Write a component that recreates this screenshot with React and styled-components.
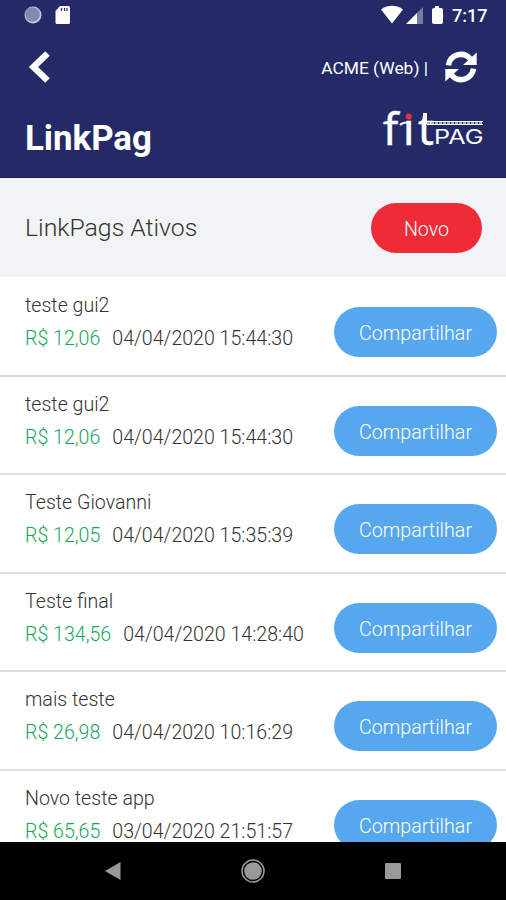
import styled, { createGlobalStyle } from 'styled-components';

const links = [
  { id: 1, name: 'teste gui2', value: 'R$ 12,06', date: '04/04/2020 15:44:30' },
  { id: 2, name: 'teste gui2', value: 'R$ 12,06', date: '04/04/2020 15:44:30' },
  { id: 3, name: 'Teste Giovanni', value: 'R$ 12,05', date: '04/04/2020 15:35:39' },
  { id: 4, name: 'Teste final', value: 'R$ 134,56', date: '04/04/2020 14:28:40' },
  { id: 5, name: 'mais teste', value: 'R$ 26,98', date: '04/04/2020 10:16:29' },
  { id: 6, name: 'Novo teste app', value: 'R$ 65,65', date: '03/04/2020 21:51:57' },
];

function StatusIcons() {
  return (
    <svg width="64" height="24" viewBox="0 0 64 24">
      <path d="M0 9.5C6 4.6 16 4.6 22 9.5L11 23.5Z" fill="#fff" />
      <path d="M42 7V24H25Z" fill="#777ba6" />
      <path d="M36 13V24H25Z" fill="#fff" />
      <path d="M54 6h4v2h2q2 0 2 2v12q0 2-2 2h-7q-2 0-2-2V10q0-2 2-2h1Z" fill="#fff" />
    </svg>
  );
}

function RefreshIcon() {
  return (
    <svg width="32" height="32" viewBox="0 0 32 32">
      <path d="M3.5 14.300A12.500 12.500 0 0 1 25.500 8" stroke="#fff" strokeWidth="5.500" fill="none" />
      <path d="M31.700 1.500V14H18Z" fill="#fff" />
      <path d="M28.500 17.700A12.500 12.500 0 0 1 6.500 24" stroke="#fff" strokeWidth="5.500" fill="none" />
      <path d="M.3 30.500V18H14Z" fill="#fff" />
    </svg>
  );
}

function Logo() {
  return (
    <LogoSvg width="102" height="42" viewBox="0 0 102 42">
      <text x="1 21 36" y="37" fontFamily="Noto Sans" fontSize="44" fill="#fff" stroke="#fff" strokeWidth="0.5">
        fit
      </text>
      <rect x="22" y="0" width="10" height="12" fill="#242a68" />
      <circle cx="26.8" cy="8.500" r="3" fill="#ee3038" />
      <path d="M18 17q2.500-2.500 7-2.500" stroke="#fff" strokeWidth="2" fill="none" />
      <path d="M43 5v10" stroke="#fff" strokeWidth="4" />
      <path d="M45 13.500H101" stroke="#fff" strokeWidth="1" />
      <path d="M45 15H101" stroke="#aeb1cf" strokeWidth="2" strokeDasharray="3 1" />
      <path d="M45 16.500H101" stroke="#fff" strokeWidth="1" />
      <text
        x="52"
        y="36"
        fontFamily="Inter"
        fontSize="19.5"
        fill="#fff"
        textLength="49.5"
        lengthAdjust="spacingAndGlyphs"
      >
        PAG
      </text>
    </LogoSvg>
  );
}

function App() {
  return (
    <Screen>
      <GlobalStyle />
      <Header>
        <StatusBar>
          <svg width="50" height="24" viewBox="0 0 50 24">
            <circle cx="9" cy="15" r="8.500" fill="#c9cbdc" />
            <circle cx="8.500" cy="14.500" r="7.300" fill="#8588aa" />
            <path d="M36 6h8.500q1.500 0 1.500 1.500v15q0 1.500-1.500 1.500H33q-1.500 0-1.500-1.500V11Z" fill="#fff" />
            <path d="M37.500 8v3M40.500 8v3M43 8v3" stroke="#242a68" strokeWidth="1.200" />
          </svg>
          <StatusRight>
            <StatusIcons />
            <Clock>7:17</Clock>
          </StatusRight>
        </StatusBar>
        <Toolbar>
          <IconButton aria-label="Voltar">
            <svg width="22" height="34" viewBox="0 0 22 34">
              <path d="M19.500 3.500 5.500 17l14 13.500" stroke="#fff" strokeWidth="6.500" fill="none" />
            </svg>
          </IconButton>
          <Account>
            <span>ACME (Web) |</span>
            <IconButton aria-label="Atualizar">
              <RefreshIcon />
            </IconButton>
          </Account>
        </Toolbar>
        <TitleRow>
          <h1>LinkPag</h1>
          <Logo />
        </TitleRow>
      </Header>
      <SectionBar>
        <h2>LinkPags Ativos</h2>
        <PillButton $color="#ef2b38" $width={111}>
          Novo
        </PillButton>
      </SectionBar>
      <List>
        {links.map(link => (
          <Item key={link.id}>
            <div>
              <Name>{link.name}</Name>
              <Details>
                <Value>{link.value}</Value>
                <span>{link.date}</span>
              </Details>
            </div>
            <PillButton $color="#56a7ee" $width={163}>
              Compartilhar
            </PillButton>
          </Item>
        ))}
      </List>
      <NavBar>
        <svg width="16" height="20" viewBox="0 0 16 20">
          <path d="M0 10 15.500 1v18Z" fill="#999" />
        </svg>
        <svg width="24" height="24" viewBox="0 0 24 24">
          <circle cx="12" cy="12" r="11" stroke="#999" strokeWidth="1.500" fill="none" />
          <circle cx="12" cy="12" r="8.800" fill="#999" />
        </svg>
        <svg width="16" height="16" viewBox="0 0 16 16">
          <rect width="16" height="16" rx="1" fill="#999" />
        </svg>
      </NavBar>
    </Screen>
  );
}

const GlobalStyle = createGlobalStyle`
  * {
    box-sizing: border-box;
  }
  body {
    margin: 0;
    font-family: Roboto, sans-serif;
  }
  h1, h2, p {
    margin: 0;
  }
  svg {
    display: block;
    flex-shrink: 0;
  }
`;

const Screen = styled.div`
  display: flex;
  flex-direction: column;
  width: 506px;
  height: 900px;
  overflow: hidden;
  background: #fff;
`;

const Header = styled.header`
  height: 178px;
  flex-shrink: 0;
  background: #242a68;
  border-bottom: 1px solid #171957;
  color: #fff;
`;

const StatusBar = styled.div`
  display: flex;
  justify-content: space-between;
  height: 32px;
  padding: 0 18px 0 24px;
`;

const StatusRight = styled.div`
  display: flex;
  gap: 7px;
`;

const Clock = styled.span`
  width: 36px;
  font-size: 18px;
  font-weight: 500;
  line-height: 32px;
`;

const Toolbar = styled.div`
  display: flex;
  justify-content: space-between;
  align-items: center;
  height: 70px;
  padding: 0 29px 0 28px;
`;

const Account = styled.div`
  display: flex;
  align-items: center;
  gap: 17px;
  font-size: 17.4px;
  span {
    padding-top: 2px;
  }
`;

const IconButton = styled.button`
  border: none;
  padding: 0;
  background: transparent;
  color: #fff;
  cursor: pointer;
`;

const TitleRow = styled.div`
  display: flex;
  justify-content: space-between;
  padding: 6px 22px 0 25px;
  h1 {
    font-size: 34.8px;
    font-weight: 700;
    line-height: 60px;
  }
`;

const LogoSvg = styled.svg`
  overflow: visible;
`;

const SectionBar = styled.section`
  display: flex;
  justify-content: space-between;
  align-items: center;
  height: 99px;
  flex-shrink: 0;
  padding: 0 24px 0 25px;
  background: #f1f3f5;
  h2 {
    font-size: 24.8px;
    font-weight: 300;
    line-height: 28px;
    color: #333;
  }
`;

const PillButton = styled.button`
  width: ${props => props.$width}px;
  height: 50px;
  flex-shrink: 0;
  padding: 3px 0 0;
  border: none;
  border-radius: 25px;
  background: ${props => props.$color};
  color: #fff;
  font-family: inherit;
  font-size: 19.7px;
  font-weight: 300;
  cursor: pointer;
`;

const List = styled.main`
  flex: 1;
  min-height: 0;
  padding-top: 1px;
  overflow: hidden;
`;

const Item = styled.article`
  display: flex;
  justify-content: space-between;
  align-items: center;
  height: 98.5px;
  padding: 12px 9px 0 25px;
  border-bottom: 2px solid #dedede;
  font-size: 19.6px;
  font-weight: 300;
  color: #333;
  > div {
    align-self: flex-start;
  }
`;

const Name = styled.p`
  line-height: 31px;
`;

const Details = styled.div`
  display: flex;
  gap: 12px;
  line-height: 36px;
`;

const Value = styled.span`
  color: #18a65b;
`;

const NavBar = styled.nav`
  display: flex;
  justify-content: space-between;
  align-items: center;
  height: 58px;
  flex-shrink: 0;
  padding: 0 105px;
  background: #000;
`;

export default App;
